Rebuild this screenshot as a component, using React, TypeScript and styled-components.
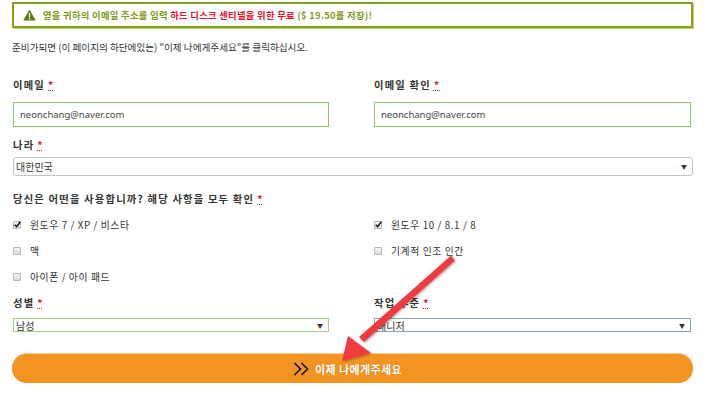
import React from "react";
import styled, { createGlobalStyle } from "styled-components";

const Global = createGlobalStyle`
  html, body { margin: 0; padding: 0; background: #fff; }
  body { font-family: "Noto Sans CJK KR", "Noto Sans", sans-serif; color: #333; }
  * { box-sizing: border-box; }
`;

const Page = styled.div`
  position: relative;
  width: 720px;
  height: 399px;
  overflow: hidden;
  padding: 2px 27px 0 12px;
`;

const Alert = styled.div`
  height: 26px;
  border: 2px solid #7fa31c;
  box-shadow: 1px 1px 0 #b9d46a;
  display: flex;
  align-items: center;
  padding-left: 9px;
  gap: 7px;
  font-size: 9.3px;
  font-weight: 700;
  color: #7c9b17;
  letter-spacing: 0.3px;
`;

const Red = styled.span`
  color: #e2112a;
`;

const Intro = styled.p`
  margin: 12px 0 0 0;
  font-size: 9.6px;
  line-height: 14px;
  color: #333;
`;

const Grid = styled.div`
  display: grid;
  grid-template-columns: 316px 317px;
  column-gap: 45px;
  margin-left: 1px;
`;

const Field = styled.div<{ $top?: number }>`
  display: flex;
  flex-direction: column;
  margin-top: ${(p) => p.$top ?? 0}px;
`;

const Label = styled.div`
  font-size: 10.3px;
  line-height: 14px;
  font-weight: 700;
  color: #333;
  letter-spacing: 1.2px;
  height: 14px;
`;

const Star = styled.span`
  color: #e2112a;
  text-decoration: underline dotted;
  margin-left: 3px;
`;

const TextInput = styled.div`
  margin-top: 10px;
  height: 25px;
  border: 1px solid #8dc46a;
  display: flex;
  align-items: center;
  padding-left: 6px;
  font-size: 9.5px;
  color: #444;
  font-family: "Noto Sans", sans-serif;
`;

const Select = styled.div<{ $border: string; $h: number; $mt: number; $r?: number }>`
  margin-top: ${(p) => p.$mt}px;
  height: ${(p) => p.$h}px;
  border: 1px solid ${(p) => p.$border};
  border-radius: ${(p) => p.$r ?? 0}px;
  display: flex;
  align-items: center;
  justify-content: space-between;
  padding: 0 5px 0 2px;
  font-size: 10px;
  color: #333;
  background: #fff;
`;

const Caret = styled.span`
  font-size: 6px;
  color: #333;
`;

const Options = styled.div`
  display: grid;
  grid-template-columns: 316px 317px;
  column-gap: 45px;
  grid-auto-rows: 26px;
  margin-top: 6px;
  margin-left: 1px;
`;

const Option = styled.div`
  display: flex;
  align-items: center;
  gap: 9px;
  font-size: 9.8px;
  color: #333;
  letter-spacing: 0.6px;
`;

const Box = styled.span`
  width: 8px;
  height: 8px;
  border: 1px solid #b7b7b7;
  border-radius: 1px;
  background: linear-gradient(#f4f4f4, #dcdcdc);
  position: relative;
  display: inline-block;
  flex: none;
`;

const Submit = styled.button`
  margin-top: 22px;
  width: 681px;
  height: 29px;
  border: none;
  border-radius: 15px;
  background: #f39322;
  display: flex;
  align-items: center;
  justify-content: center;
  gap: 5px;
  color: #fff;
  font-family: "Noto Sans CJK KR", sans-serif;
  font-size: 11px;
  font-weight: 700;
  letter-spacing: 0.4px;
  text-shadow: 0 0 1px rgba(0, 0, 0, 0.25);
  padding: 0 10px 0 0;
  box-shadow: 0 -1px 0 #f7c98f;
`;

const ArrowLayer = styled.svg`
  position: absolute;
  left: 0;
  top: 0;
  pointer-events: none;
`;

const Check = () => (
  <svg width="9" height="9" viewBox="0 0 9 9" style={{ position: "absolute", left: -1, top: -2 }}>
    <path d="M1.8 4.8 L3.6 6.6 L7.4 1.8" stroke="#111" strokeWidth="1.5" fill="none" />
  </svg>
);

const CheckBox = ({ checked }: { checked?: boolean }) => <Box>{checked && <Check />}</Box>;

const Warn = () => (
  <svg width="13" height="12" viewBox="0 0 13 12">
    <path d="M6.5 0.5 L12.7 11.5 L0.3 11.5 Z" fill="#577a10" />
    <rect x="5.8" y="4" width="1.4" height="4.2" fill="#fff" />
    <rect x="5.8" y="9" width="1.4" height="1.4" fill="#fff" />
  </svg>
);

const Chevrons = () => (
  <svg width="17" height="14" viewBox="0 0 17 14">
    <path d="M1.5 1 L7.5 7 L1.5 13 M8.5 1 L14.5 7 L8.5 13" stroke="#111" strokeWidth="1.6" fill="none" />
  </svg>
);

export default function App() {
  return (
    <Page>
      <Global />
      <Alert>
        <Warn />
        <span>
          엳을 귀하의 이메일 주소를 입력 <Red>하드 디스크 센티넬을 위한 무료</Red> ($ 19.50를 저장)!
        </span>
      </Alert>
      <Intro>준비가되면 (이 페이지의 하단에있는) "이제 나에게주세요"를 클릭하십시오.</Intro>

      <Grid>
        <Field $top={24}>
          <Label>
            이메일<Star>*</Star>
          </Label>
          <TextInput>neonchang@naver.com</TextInput>
        </Field>
        <Field $top={24}>
          <Label>
            이메일 확인<Star>*</Star>
          </Label>
          <TextInput>neonchang@naver.com</TextInput>
        </Field>
      </Grid>

      <Field $top={11} style={{ marginLeft: 1 }}>
        <Label>
          나라<Star>*</Star>
        </Label>
        <Select $border="#c4c4c4" $h={19} $mt={5} $r={3}>
          <span>대한민국</span>
          <Caret>▼</Caret>
        </Select>
      </Field>

      <Field $top={16} style={{ marginLeft: 1 }}>
        <Label>
          당신은 어떤을 사용합니까? 해당 사항을 모두 확인<Star>*</Star>
        </Label>
      </Field>

      <Options>
        <Option>
          <CheckBox checked />윈도우 7 / XP / 비스타
        </Option>
        <Option>
          <CheckBox checked />윈도우 10 / 8.1 / 8
        </Option>
        <Option>
          <CheckBox />맥
        </Option>
        <Option>
          <CheckBox />기계적 인조 인간
        </Option>
        <Option>
          <CheckBox />아이폰 / 아이 패드
        </Option>
      </Options>

      <Grid>
        <Field $top={6}>
          <Label>
            성별<Star>*</Star>
          </Label>
          <Select $border="#9fd47e" $h={14} $mt={8}>
            <span>남성</span>
            <Caret>▼</Caret>
          </Select>
        </Field>
        <Field $top={6}>
          <Label>
            작업 수준<Star>*</Star>
          </Label>
          <Select $border="#7fa6c0" $h={14} $mt={8}>
            <span>매니저</span>
            <Caret>▼</Caret>
          </Select>
        </Field>
      </Grid>

      <Submit>
        <Chevrons />
        이제 나에게주세요
      </Submit>

      <ArrowLayer width="720" height="399" viewBox="0 0 720 399">
        <defs>
          <filter id="sh" x="-20%" y="-20%" width="140%" height="140%">
            <feDropShadow dx="1" dy="1" stdDeviation="1" floodColor="#000" floodOpacity="0.35" />
          </filter>
        </defs>
        <g filter="url(#sh)" fill="#ee3b40">
          <path d="M451 255.5 L455 260.5 L364 342 L359 337 Z" />
          <path d="M342 361 L348 336 L371 353 Z" />
        </g>
      </ArrowLayer>
    </Page>
  );
}
